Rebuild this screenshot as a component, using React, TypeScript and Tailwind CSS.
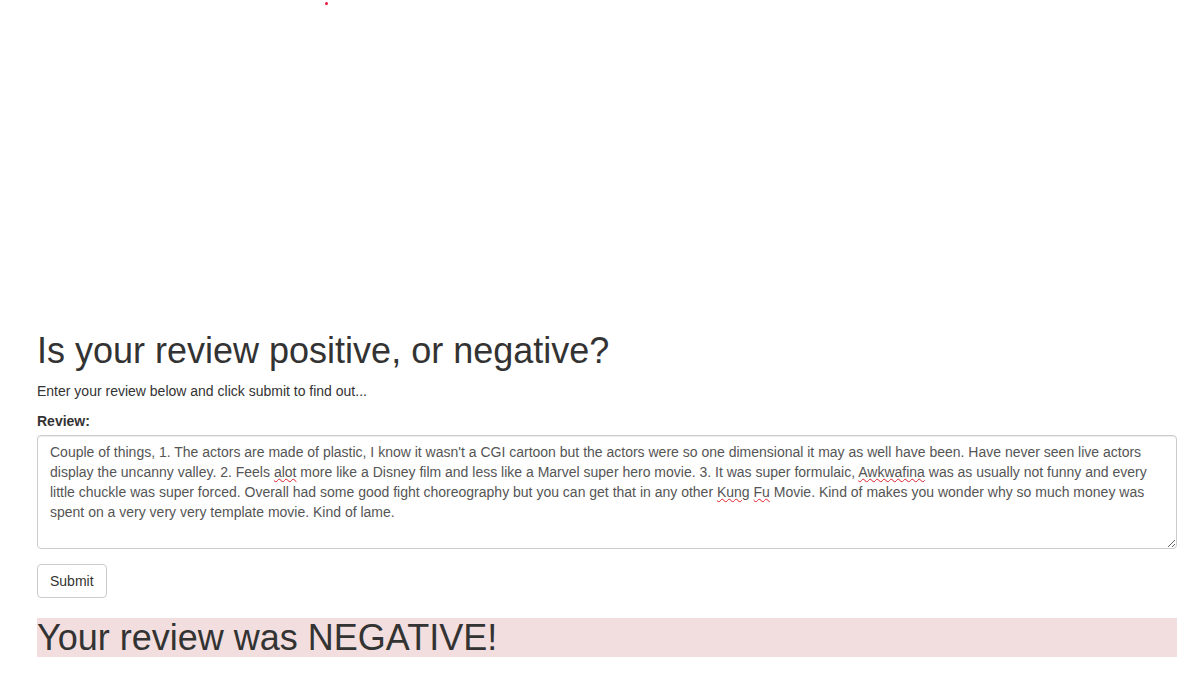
import React from "react";

const Sp = ({ children }: { children: React.ReactNode }) => (
  <span className="underline decoration-wavy decoration-[#e0202a] decoration-[1px] underline-offset-[1px]">{children}</span>
);

export default function App() {
  return (
    <div className="min-h-[691px] bg-white text-[14px] leading-[20px] text-[#333]" style={{ fontFamily: '"Liberation Sans", Arial, Helvetica, sans-serif' }}>
      <div className="h-[311px]">
        <div className="ml-[325px] pt-[2px]">
          <div className="h-[3px] w-[3px] rounded-full bg-[#e8173f]" />
        </div>
      </div>
      <div className="px-[37px] pr-[14px]">
        <h1 className="mt-[20px] mb-[10px] text-[36px] leading-[39.6px] font-normal">
          Is your review positive, or negative?
        </h1>
        <p className="mb-[10px]">Enter your review below and click submit to find out...</p>
        <form onSubmit={(e) => e.preventDefault()}>
          <div className="mb-[15px]">
            <label className="mb-[4px] block font-bold">Review:</label>
            <div
              role="textbox"
              aria-multiline="true"
              className="block h-[114px] w-full resize-y overflow-auto whitespace-nowrap rounded-[4px] border border-[#ccc] px-[12px] py-[6px] text-[14px] leading-[20px] text-[#555] shadow-[inset_0_1px_1px_rgba(0,0,0,0.075)]"
            >
              <div>Couple of things, 1. The actors are made of plastic, I know it wasn't a CGI cartoon but the actors were so one dimensional it may as well have been. Have never seen live actors</div>
              <div>display the uncanny valley. 2. Feels <Sp>alot</Sp> more like a Disney film and less like a Marvel super hero movie. 3. It was super formulaic, <Sp>Awkwafina</Sp> was as usually not funny and every</div>
              <div>little chuckle was super forced. Overall had some good fight choreography but you can get that in any other <Sp>Kung</Sp> <Sp>Fu</Sp> Movie. Kind of makes you wonder why so much money was</div>
              <div>spent on a very very very template movie. Kind of lame.</div>
            </div>
          </div>
          <button
            type="submit"
            className="h-[34px] rounded-[4px] border border-[#ccc] bg-white px-[12px] text-[14px] leading-[20px] text-[#333]"
          >
            Submit
          </button>
        </form>
        <div className="mt-[20px] bg-[#f2dede] text-[36px] leading-[39.6px] text-[#333]">
          Your review was NEGATIVE!
        </div>
      </div>
    </div>
  );
}
